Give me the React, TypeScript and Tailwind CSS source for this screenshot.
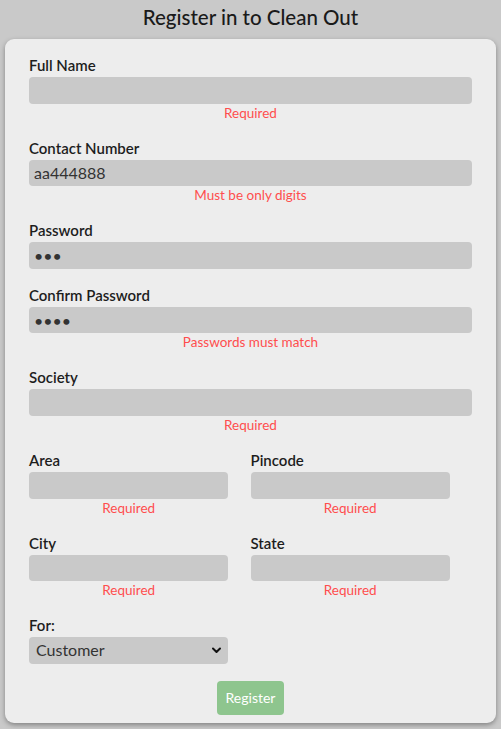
import React from 'react';

const font = { fontFamily: 'Lato, "Noto Sans", sans-serif' };

type FieldProps = {
  label: string;
  value?: string;
  type?: string;
  error?: string;
  half?: boolean;
};

const Field: React.FC<FieldProps> = ({ label, value = '', type = 'text', error, half }) => {
  return (
    <div className="flex flex-col">
      <label className="text-[15px] font-semibold text-[#1d1d1d] leading-[18px]">{label}</label>
      <div className={half ? 'w-[90%]' : 'w-full'}>
        <input
          type={type}
          defaultValue={value}
          className="mt-[3px] block h-[26.6px] w-full rounded-[4px] bg-[#c9c9c9] px-[5px] text-[16px] text-[#333] outline-none"
        />
        {error ? (
          <p className="h-[18px] text-center text-[13.5px] leading-[18px] text-[#ff4d4d]">{error}</p>
        ) : null}
      </div>
    </div>
  );
};

const App: React.FC = () => {
  return (
    <div className="min-h-[729px] bg-[#c9c9c9] px-[5px] pt-[3px] pb-[5px]" style={font}>
      <h1 className="text-center text-[20.5px] font-medium leading-[28px] text-[#1a1a1a]">Register in to Clean Out</h1>
      <div className="mt-[8px] rounded-[9px] bg-[#ededed] px-[24px] pt-[17px] pb-[8px] shadow-[0_2px_5px_rgba(0,0,0,0.35)]">
        <form className="flex flex-col gap-[17px]">
          <Field label="Full Name" error="Required" />
          <Field label="Contact Number" value="aa444888" error="Must be only digits" />
          <Field label="Password" type="password" value="abc" />
          <Field label="Confirm Password" type="password" value="abcd" error="Passwords must match" />
          <Field label="Society" error="Required" />
          <div className="grid grid-cols-2">
            <Field label="Area" error="Required" half />
            <Field label="Pincode" error="Required" half />
          </div>
          <div className="grid grid-cols-2">
            <Field label="City" error="Required" half />
            <Field label="State" error="Required" half />
          </div>
          <div className="flex flex-col">
            <label className="text-[15px] font-semibold text-[#1d1d1d] leading-[18px]">For:</label>
            <div className="relative mt-[3px] w-[199px]">
              <select
                defaultValue="Customer"
                className="block h-[26.6px] w-full appearance-none rounded-[4px] bg-[#c9c9c9] pl-[7px] text-[16px] text-[#333] outline-none"
              >
                <option>Customer</option>
                <option>Worker</option>
              </select>
              <svg
                className="pointer-events-none absolute right-[7px] top-[10px]"
                width="9"
                height="7"
                viewBox="0 0 9 7"
                fill="none"
              >
                <path d="M1 1.5 L4.5 5 L8 1.5" stroke="#111" strokeWidth="2" strokeLinecap="round" strokeLinejoin="round" />
              </svg>
            </div>
          </div>
          <div className="flex justify-center">
            <button
              type="button"
              className="h-[34px] rounded-[4px] bg-[#8ec58e] px-[9px] text-[14px] text-white"
            >
              Register
            </button>
          </div>
        </form>
      </div>
    </div>
  );
};

export default App;
